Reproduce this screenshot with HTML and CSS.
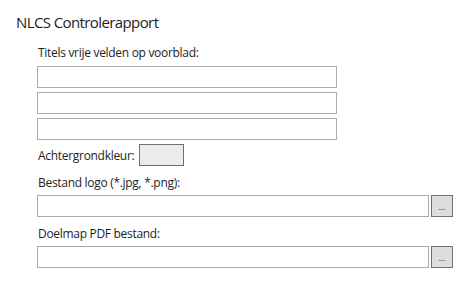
FILE: index.html
```html
<!DOCTYPE html>
<html>
<head>
<meta charset="utf-8">
<link rel="stylesheet" href="styles.css">
</head>
<body>
<div class="page">
  <h1 class="title">NLCS Controlerapport</h1>
  <div class="form">
    <div class="label first">Titels vrije velden op voorblad:</div>
    <div class="stack">
      <input class="field" type="text">
      <input class="field" type="text">
      <input class="field" type="text">
    </div>
    <div class="color-row">
      <span class="label">Achtergrondkleur:</span>
      <span class="swatch"></span>
    </div>
    <div class="label section">Bestand logo (*.jpg, *.png):</div>
    <div class="browse-row">
      <input class="field wide" type="text">
      <button class="browse">...</button>
    </div>
    <div class="label section">Doelmap PDF bestand:</div>
    <div class="browse-row">
      <input class="field wide" type="text">
      <button class="browse">...</button>
    </div>
  </div>
</div>
</body>
</html>
```
FILE: styles.css
```css
* { box-sizing: border-box; }
html, body { margin: 0; background: #fff; }
body {
  font-family: "Open Sans", "Segoe UI", sans-serif;
  color: #1e1e1e;
  width: 470px;
  height: 291px;
  overflow: hidden;
}
.page { padding: 11px 0 0 16px; }
.title {
  margin: 0;
  font-size: 15px;
  font-weight: 400;
  line-height: 22px;
  letter-spacing: -0.6px;
}
.form {
  padding: 12px 0 0 21px;
  display: flex;
  flex-direction: column;
}
.label {
  font-size: 12px;
  line-height: 15px;
  letter-spacing: -0.3px;
  padding-left: 1px;
}
.stack {
  display: flex;
  flex-direction: column;
  gap: 4px;
  margin-top: 6px;
}
.field {
  display: block;
  width: 300px;
  height: 22px;
  border: 1px solid #ababab;
  background: #fff;
  margin: 0;
  padding: 0;
  outline: none;
}
.field.wide { width: 392px; }
.color-row {
  display: flex;
  align-items: center;
  gap: 5px;
  margin-top: 4px;
  height: 22px;
}
.swatch {
  display: block;
  width: 45px;
  height: 22px;
  border: 1px solid #707070;
  background: #ebebec;
}
.label.section { margin-top: 9px; }
.browse-row {
  display: flex;
  align-items: flex-start;
  gap: 2px;
  margin-top: 5px;
}
.browse {
  width: 22px;
  height: 22px;
  margin: 0;
  padding: 0 0 5px;
  border: 1px solid #707070;
  background: #dddddd;
  font-family: "Open Sans", sans-serif;
  font-size: 9px;
  line-height: 1;
  color: #333;
  display: flex;
  align-items: flex-end;
  justify-content: center;
  letter-spacing: 0;
}
```
